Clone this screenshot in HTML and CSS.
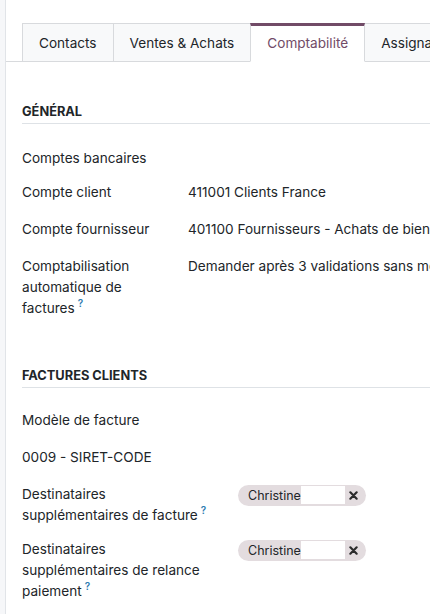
FILE: index.html
```html
<!DOCTYPE html>
<html lang="fr">
<head>
  <meta charset="UTF-8">
  <meta name="viewport" content="width=device-width, initial-scale=1">
  <title>Contact - Comptabilité</title>
  <link rel="stylesheet" href="styles.css">
</head>
<body>

  <div class="sheet">

    <!-- ===== Tabs ===== -->
    <ul class="tabs">
      <li class="tab">Contacts</li>
      <li class="tab">Ventes &amp; Achats</li>
      <li class="tab active">Comptabilité</li>
      <li class="tab">Assignations</li>
    </ul>

    <div class="tab-pane">

      <!-- ===== Général ===== -->
      <div class="group group-general">
        <div class="group-title">Général</div>

        <div class="field tight">
          <div class="label">Comptes bancaires</div>
          <div class="value"></div>
        </div>
        <div class="field">
          <div class="label">Compte client</div>
          <div class="value">411001 Clients France</div>
        </div>
        <div class="field">
          <div class="label">Compte fournisseur</div>
          <div class="value">401100 Fournisseurs - Achats de biens et prestations de services</div>
        </div>
        <div class="field">
          <div class="label">Comptabilisation automatique de factures<sup class="help">?</sup></div>
          <div class="value">Demander après 3 validations sans modification</div>
        </div>
      </div>

      <!-- ===== Factures clients ===== -->
      <div class="group group-invoices">
        <div class="group-title">Factures clients</div>

        <div class="field stacked">
          <div class="label">Modèle de facture</div>
        </div>
        <div class="field stacked">
          <div class="value">0009 - SIRET-CODE</div>
        </div>
        <div class="field tight">
          <div class="label">Destinataires supplémentaires de facture<sup class="help">?</sup></div>
          <div class="value">
            <span class="tag">Christine<span class="tag-input"></span>
              <svg class="tag-x" viewBox="0 0 10 10" width="9" height="9"><path d="M1.5 1.5L8.5 8.5M8.5 1.5L1.5 8.5" stroke="#2b2b2b" stroke-width="2.4" stroke-linecap="round"/></svg>
            </span>
          </div>
        </div>
        <div class="field">
          <div class="label">Destinataires supplémentaires de relance paiement<sup class="help">?</sup></div>
          <div class="value">
            <span class="tag">Christine<span class="tag-input"></span>
              <svg class="tag-x" viewBox="0 0 10 10" width="9" height="9"><path d="M1.5 1.5L8.5 8.5M8.5 1.5L1.5 8.5" stroke="#2b2b2b" stroke-width="2.4" stroke-linecap="round"/></svg>
            </span>
          </div>
        </div>
      </div>

    </div>
  </div>

</body>
</html>
```

FILE: styles.css
```css
/* ===== Base ===== */
html, body {
  overflow: hidden;
}
body {
  margin: 0;
  font-family: Inter, 'Noto Sans', sans-serif;
  font-size: 13.6px;
  line-height: 21px;
  color: #212529;
  background: #f6f7f9;
}
.sheet {
  margin-left: 5px;
  border-left: 1px solid #e1e4e8;
  background: #fff;
  min-height: 100vh;
}

/* ===== Tabs ===== */
.tabs {
  list-style: none;
  margin: 0;
  padding: 23px 0 0 16px;
  display: flex;
  white-space: nowrap;
  border-bottom: 1px solid #d8dadd;
}
.tab {
  flex: none;
  padding: 9px 16px 7px;
  height: 21px;
  background: #f8f9fa;
  border: 1px solid #d8dadd;
  border-right: none;
  margin-bottom: -1px;
}
.tab.active {
  background: #fff;
  color: #714b67;
  border-top: 3px solid #714b67;
  border-bottom-color: #fff;
  padding-top: 7px;
  border-right: 1px solid #d8dadd;
}
.tab.active + .tab {
  border-left: none;
}

/* ===== Groups ===== */
.tab-pane {
  padding-left: 16px;
}
.group-title {
  font-size: 12.8px;
  font-weight: 700;
  text-transform: uppercase;
  line-height: 20px;
  padding-bottom: 1px;
  border-bottom: 1px solid #dee2e6;
  margin-bottom: 24px;
}
.group-general {
  padding-top: 40px;
}
.group-invoices {
  padding-top: 31px;
}
.group-invoices .group-title {
  margin-bottom: 22px;
}

/* ===== Fields ===== */
.field {
  display: flex;
  margin-bottom: 16px;
}
.field.tight {
  margin-bottom: 13px;
}
.field.stacked {
  margin-bottom: 16px;
}
.label {
  flex: none;
  width: 150px;
  padding-right: 16px;
}
.group-invoices .label {
  width: 186px;
  padding-right: 30px;
}
.group-invoices .field.stacked .label {
  width: auto;
  padding-right: 0;
}
.value {
  white-space: nowrap;
}
.help {
  color: #2a7bb0;
  font-size: 10px;
  font-weight: 600;
  line-height: 0;
  margin-left: 3px;
  vertical-align: 6px;
}

/* ===== Tags ===== */
.tag {
  display: inline-flex;
  align-items: center;
  height: 21px;
  padding: 0 8px 0 10px;
  border-radius: 11px;
  background: #e3dcdf;
  font-size: 12.5px;
  margin-top: 0.5px;
}
.tag-input {
  display: inline-block;
  width: 44px;
  height: 18px;
  background: #fff;
}
.tag-x {
  margin-left: 4px;
}
```
